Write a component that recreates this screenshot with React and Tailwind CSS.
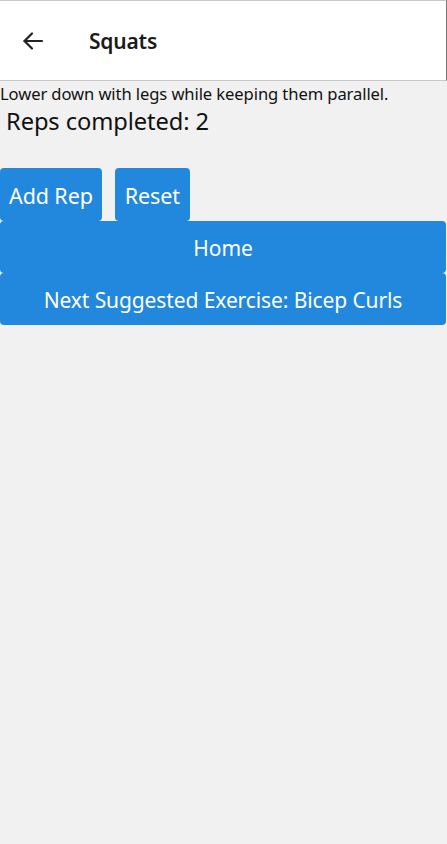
export default function App() {
  const reps = 2;

  return (
    <div className="min-h-[844px] bg-[#f1f1f1] font-['Noto_Sans','Open_Sans',sans-serif] text-[#111]">
      <header className="flex h-[81px] items-center border-t border-b border-r border-[#c8c8c8] border-r-[#777] bg-white">
        <button className="ml-[20px] flex h-[24px] w-[26px] items-center justify-center">
          <svg width="24" height="24" viewBox="0 0 24 24" fill="none" stroke="#222" strokeWidth="2.2" strokeLinecap="round" strokeLinejoin="round">
            <path d="M21 12H3.5" />
            <path d="M11 4.5L3.5 12L11 19.5" />
          </svg>
        </button>
        <h1 className="ml-[43px] pt-[2px] text-[21px] font-semibold tracking-[-0.2px] text-[#1b1b1b]">Squats</h1>
      </header>

      <p className="text-[16.6px] leading-[26px] tracking-[-0.1px]">Lower down with legs while keeping them parallel.</p>
      <p className="ml-[6px] text-[23.7px] leading-[28px] tracking-[-0.1px]">Reps completed: {reps}</p>

      <div className="mt-[33px] flex gap-[13px]">
        <button className="h-[53px] rounded-[4px] bg-[#2288dd] px-[9px] pt-[3px] text-[21.5px] tracking-[-0.1px] text-white">Add Rep</button>
        <button className="h-[53px] rounded-[4px] bg-[#2288dd] px-[10px] pt-[3px] text-[21.5px] tracking-[-0.1px] text-white">Reset</button>
      </div>
      <button className="block h-[52px] w-[446px] rounded-[4px] bg-[#2288dd] pt-[3px] text-[21px] tracking-[-0.1px] text-white">Home</button>
      <button className="block h-[52px] w-[446px] rounded-[4px] bg-[#2288dd] pt-[3px] text-[21px] tracking-[-0.1px] text-white">Next Suggested Exercise: Bicep Curls</button>
    </div>
  );
}
